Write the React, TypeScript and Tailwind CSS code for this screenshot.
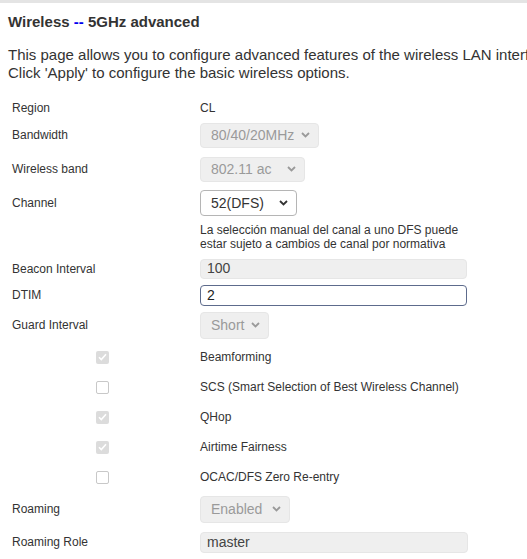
import React from 'react';

const Chevron: React.FC<{ disabled?: boolean }> = ({ disabled }) => (
  <svg width="9" height="6" viewBox="0 0 9 6" className="shrink-0">
    <path d="M1 1l3.5 3.5L8 1" fill="none" stroke={disabled ? '#9a9a9a' : '#333'} strokeWidth="1.8" />
  </svg>
);

const Select: React.FC<{ value: string; width: string; disabled?: boolean; height?: string }> = ({ value, width, disabled, height = 'h-[25px]' }) => (
  <div
    className={`${width} ${height} flex items-center justify-between rounded-[4px] border pl-[10px] pr-[8px] text-[14px] ${
      disabled ? 'bg-[#efefef] border-[#e6e6e6] text-[#9a9a9a]' : 'bg-white border-[#b5b5b5] text-[#333]'
    }`}
  >
    <span>{value}</span>
    <Chevron disabled={disabled} />
  </div>
);

const Checkbox: React.FC<{ checked?: boolean }> = ({ checked }) =>
  checked ? (
    <span className="w-[13px] h-[13px] rounded-[2px] bg-[#dcdcdc] flex items-center justify-center">
      <svg width="9" height="8" viewBox="0 0 9 8">
        <path d="M1 4.2l2.3 2.3L8 1.2" fill="none" stroke="#fff" strokeWidth="1.6" />
      </svg>
    </span>
  ) : (
    <span className="w-[13px] h-[13px] rounded-[2px] border border-[#c8c8c8] bg-white" />
  );

const Row: React.FC<{ label?: string; h: string; children: React.ReactNode }> = ({ label, h, children }) => (
  <div className={`flex items-center ${h}`}>
    <div className="w-[188px] shrink-0 text-[12px] text-[#333]">{label}</div>
    {children}
  </div>
);

const CheckRow: React.FC<{ label: string; checked?: boolean }> = ({ label, checked }) => (
  <div className="flex items-center h-[30px]">
    <div className="w-[188px] shrink-0 pl-[84px] flex items-center">
      <Checkbox checked={checked} />
    </div>
    <span className="text-[12px] text-[#333]">{label}</span>
  </div>
);

export default function App() {
  return (
    <div className="w-[527px] h-[559px] overflow-hidden bg-white font-['Liberation_Sans',Arial,sans-serif] text-[#333]">
      <div className="h-[3px] bg-[#e4e4e4]" />
      <div className="px-2">
        <h1 className="mt-[10px] text-[15px] leading-[17px] font-bold text-[#333] whitespace-nowrap">
          Wireless <span className="text-[#0000ee]">--</span> 5GHz advanced
        </h1>
        <p className="mt-[16px] text-[15px] leading-[18px] whitespace-nowrap">
          This page allows you to configure advanced features of the wireless LAN interface.
          <br />
          Click 'Apply' to configure the basic wireless options.
        </p>
      </div>
      <div className="pl-3 mt-[16px]">
        <Row label="Region" h="h-[20px]">
          <span className="text-[12px]">CL</span>
        </Row>
        <Row label="Bandwidth" h="h-[34px]">
          <Select value="80/40/20MHz" width="w-[119px]" disabled />
        </Row>
        <Row label="Wireless band" h="h-[34px]">
          <Select value="802.11 ac" width="w-[105px]" disabled />
        </Row>
        <Row label="Channel" h="h-[34px]">
          <Select value="52(DFS)" width="w-[97px]" height="h-[26px]" />
        </Row>
        <div className="pl-[188px] mt-[3px] text-[12px] leading-[14px]">
          La selección manual del canal a uno DFS puede
          <br />
          estar sujeto a cambios de canal por normativa
        </div>
        <Row label="Beacon Interval" h="h-[27px] mt-[4px]">
          <div className="w-[267px] h-[20px] rounded-[4px] bg-[#efefef] border border-[#e6e6e6] pl-[6px] flex items-center text-[14px] text-[#444]">
            100
          </div>
        </Row>
        <Row label="DTIM" h="h-[26px]">
          <div className="w-[267px] h-[21px] rounded-[4px] bg-white border border-[#5d6b8c] pl-[6px] flex items-center text-[14px] text-[#222]">
            2
          </div>
        </Row>
        <Row label="Guard Interval" h="h-[34px]">
          <Select value="Short" width="w-[69px]" height="h-[27px]" disabled />
        </Row>
        <CheckRow label="Beamforming" checked />
        <CheckRow label="SCS (Smart Selection of Best Wireless Channel)" />
        <CheckRow label="QHop" checked />
        <CheckRow label="Airtime Fairness" checked />
        <CheckRow label="OCAC/DFS Zero Re-entry" />
        <Row label="Roaming" h="h-[34px]">
          <Select value="Enabled" width="w-[90px]" height="h-[27px]" disabled />
        </Row>
        <Row label="Roaming Role" h="h-[32px]">
          <div className="w-[268px] h-[21px] rounded-[4px] bg-[#efefef] border border-[#e6e6e6] pl-[6px] flex items-center text-[14px] text-[#444]">
            master
          </div>
        </Row>
      </div>
    </div>
  );
}
